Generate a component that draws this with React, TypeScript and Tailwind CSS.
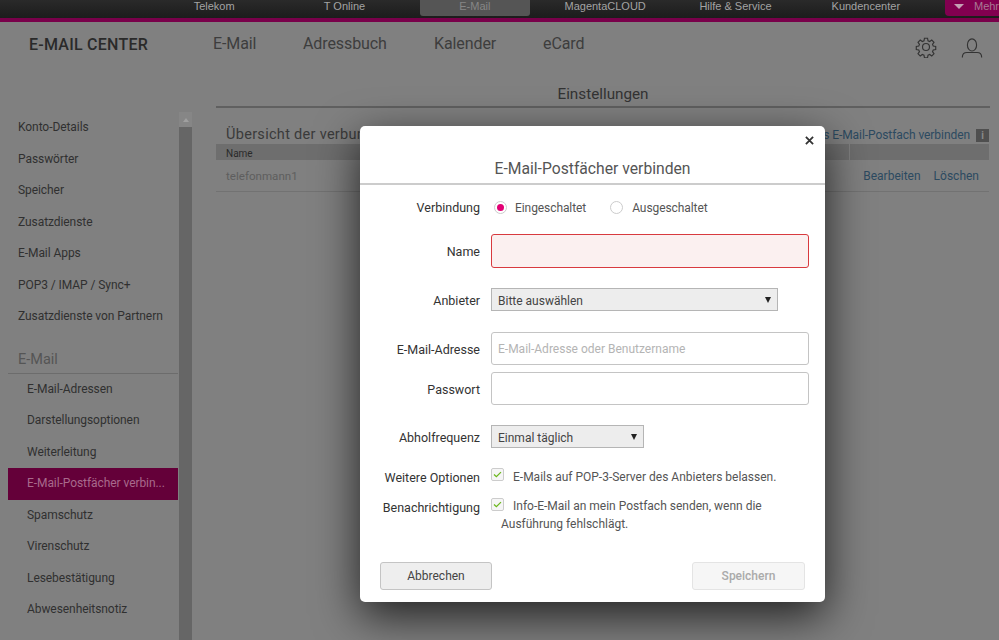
import type { ReactNode } from 'react'

const topLinks = ['Telekom', 'T Online', 'E-Mail', 'MagentaCLOUD', 'Hilfe & Service', 'Kundencenter']

const accountItems = ['Konto-Details', 'Passwörter', 'Speicher', 'Zusatzdienste', 'E-Mail Apps', 'POP3 / IMAP / Sync+', 'Zusatzdienste von Partnern']
const mailItems = ['E-Mail-Adressen', 'Darstellungsoptionen', 'Weiterleitung', 'E-Mail-Postfächer verbin...', 'Spamschutz', 'Virenschutz', 'Lesebestätigung', 'Abwesenheitsnotiz']

function Caret() {
  return <span className="w-0 h-0 border-x-[3px] border-x-transparent border-t-[6px] border-t-[#222]" />
}

function Checkbox() {
  return (
    <span className="inline-flex align-top mt-[1px] mr-[9px] indent-0 w-[13px] h-[13px] border border-[#ccc] rounded-[2px] bg-[#f6f6f6] items-center justify-center">
      <svg viewBox="0 0 12 12" className="w-[11px] h-[11px]" fill="none" stroke="#6cb81e" strokeWidth="1.4">
        <path d="M2.200 6 4.800 8.400 9.800 3.400" />
      </svg>
    </span>
  )
}

function Label({ children }: { children: ReactNode }) {
  return <span className="w-[120px] shrink-0 pt-[2px] leading-[18px] text-right text-[12.5px] text-[#333]">{children}</span>
}

export default function App() {
  return (
    <div className="relative h-[640px] w-[999px] overflow-hidden bg-[#808080] font-['Roboto',sans-serif]">
      <div className="h-[18px] bg-gradient-to-b from-[#2a2a2a] to-[#1c1c1c] flex pl-[149px] font-['Liberation_Sans',sans-serif] text-[11px] leading-[13px]">
        {topLinks.map((label) => (
          <div key={label} className="w-[130.5px] flex justify-center">
            {label === 'E-Mail' ? (
              <span className="w-[110px] h-[16px] text-center bg-[#555] text-[#868686] rounded-b-[3px]">{label}</span>
            ) : (
              <span className="text-[#a3a3a3]">{label}</span>
            )}
          </div>
        ))}
        <div className="ml-[14px] flex-1 h-[16px] bg-[#820050] rounded-bl-[4px] flex items-start pl-[9px] text-[#a87a94] gap-[10px]">
          <span className="mt-[4px] w-0 h-0 border-x-[5px] border-x-transparent border-t-[5px] border-t-[#c4a0b4]" />
          Mehr
        </div>
      </div>
      <div className="h-[4px] bg-[#79004a]" />

      <header className="h-[44px] flex items-center">
        <span className="ml-[29px] w-[184px] mt-[2px] text-[16px] font-medium tracking-[0.25px] text-[#2a2a2a]">E-MAIL CENTER</span>
        <nav className="flex text-[16px] text-[#3d3d3d] tracking-[-0.1px]">
          <span className="w-[90px]">E-Mail</span>
          <span className="w-[131px]">Adressbuch</span>
          <span className="w-[109px]">Kalender</span>
          <span>eCard</span>
        </nav>
        <div className="ml-auto mr-[16px] mt-[5px] flex gap-[24px] text-[#333]">
          <svg viewBox="0 0 24 24" className="w-[22px] h-[22px]" fill="none" stroke="currentColor" strokeWidth="1.25">
            <path d="M10.300 2.500h3.400l.5 2.700 1.800.8 2.300-1.600 2.400 2.400-1.600 2.300.8 1.800 2.700.5v3.400l-2.700.5-.8 1.800 1.600 2.300-2.400 2.400-2.300-1.600-1.800.8-.5 2.700h-3.400l-.5-2.700-1.800-.8-2.300 1.600-2.400-2.400 1.600-2.300-.8-1.800-2.700-.5v-3.400l2.700-.5.8-1.800-1.600-2.300 2.400-2.400 2.300 1.600 1.800-.8z" />
            <circle cx="12" cy="12" r="3.800" />
          </svg>
          <svg viewBox="0 0 24 24" className="w-[22px] h-[22px]" fill="none" stroke="currentColor" strokeWidth="1.25">
            <ellipse cx="12" cy="9.800" rx="5" ry="6.600" />
            <path d="M1.500 23.500V23c0-3 2-5 5-5h11c3 0 5 2 5 5v.5" />
          </svg>
        </div>
      </header>

      <div className="flex">
        <aside className="w-[192px] shrink-0 flex pt-[45px] pl-[8px]">
          <div className="w-[171px] shrink-0">
            <ul className="text-[12px] tracking-[-0.07px] text-[#303030]">
              {accountItems.map((item) => (
                <li key={item} className="h-[31.5px] leading-[32px] pl-[10px]">{item}</li>
              ))}
            </ul>
            <div className="mt-[12px] w-[170px] h-[30px] pl-[10px] leading-[32px] text-[14.5px] text-[#555] border-b border-[#6c6c6c]">E-Mail</div>
            <ul className="text-[12px] tracking-[-0.07px] text-[#303030]">
              {mailItems.map((item) => (
                <li
                  key={item}
                  className={`h-[31.5px] leading-[31.5px] pl-[19px] w-[170px] ${item.startsWith('E-Mail-Postf') ? 'bg-[#640039] text-[#a86a8c]' : ''}`}
                >
                  {item}
                </li>
              ))}
            </ul>
          </div>
          <div className="w-[13px] h-[620px] mt-[1px] shrink-0 flex flex-col">
            <div className="h-[15px] bg-[#868686] flex items-center justify-center">
              <span className="w-0 h-0 border-x-[3.5px] border-x-transparent border-b-[4px] border-b-[#a0a0a0]" />
            </div>
            <div className="flex-1 bg-[#666]" />
          </div>
        </aside>

        <main className="ml-[24px] w-[774px] pt-[15px]">
          <h2 className="h-[25px] text-center text-[15.25px] leading-[27px] text-[#333] border-b-2 border-[#606060] box-content">Einstellungen</h2>
          <div className="mt-[18px] pl-[10px] pr-[1px] flex justify-between items-center h-[18px]">
            <span className="text-[14.5px] text-[#3a3a3a] tracking-[0.3px]">Übersicht der verbundenen Postfächer</span>
            <span className="flex items-center gap-[6px] text-[12px] tracking-[-0.07px] text-[#2c4a60]">
              Neues E-Mail-Postfach verbinden
              <span className="w-[13px] h-[13px] bg-[#4f4f4f] text-[#8a8a8a] text-[10px] leading-[13px] font-bold text-center">i</span>
            </span>
          </div>
          <div className="mr-[1px] h-[16px] bg-[#6e6e6e] pl-[10px] text-[10px] leading-[19px] text-[#2a2a2a] flex justify-between">
            Name
            <span className="w-[140px] border-l border-[#808080]" />
          </div>
          <div className="h-[32px] pt-[1px] mr-[1px] flex items-center justify-between px-[10px] border-b border-[#727272] text-[12px]">
            <span className="text-[#5e5e5e] text-[11.6px] pt-[1px]">telefonmann1</span>
            <span className="flex gap-[13px] text-[#2c4a60]">
              <span>Bearbeiten</span>
              <span>Löschen</span>
            </span>
          </div>
        </main>
      </div>

      {/* Dialog: E-Mail-Postfächer verbinden */}
      <div className="absolute left-[360px] top-[126px] w-[465px] h-[476px] bg-white rounded-[5px] shadow-[0_14px_45px_rgba(0,0,0,0.75)] flex flex-col">
        <div className="h-[57px] shrink-0 relative border-b-2 border-[#ccc] box-content">
          <span className="absolute right-[11px] top-[10px] text-[#333]">
            <svg viewBox="0 0 10 10" className="w-[9px] h-[9px] block" stroke="currentColor" strokeWidth="2">
              <path d="M1 1 9 9M9 1 1 9" />
            </svg>
          </span>
          <div className="absolute inset-x-0 bottom-[4px] text-center text-[15.7px] leading-[20px] text-[#555]">E-Mail-Postfächer verbinden</div>
        </div>

        <div className="mt-[13px] flex items-center h-[18px] text-[12px] tracking-[-0.08px] text-[#555]">
          <span className="tracking-normal flex items-center"><Label>Verbindung</Label></span>
          <span className="ml-[14px] w-[13px] h-[13px] rounded-full border border-[#ccc] flex items-center justify-center">
            <span className="w-[7px] h-[7px] rounded-full bg-[#e20074]" />
          </span>
          <span className="ml-[8px] pt-[2px]">Eingeschaltet</span>
          <span className="ml-[24px] w-[13px] h-[13px] rounded-full border border-[#ccc]" />
          <span className="ml-[9px] pt-[2px]">Ausgeschaltet</span>
        </div>

        <div className="mt-[18px] flex items-center">
          <Label>Name</Label>
          <input className="ml-[11px] w-[318px] h-[34px] rounded-[3px] border border-[#d83a3f] bg-[#fbf0f0]" />
        </div>

        <div className="mt-[20px] flex items-center">
          <Label>Anbieter</Label>
          <div className="ml-[11px] w-[287px] h-[23px] px-[6px] flex items-center justify-between border border-[#b5b5b5] bg-[#ededed] text-[12px] text-[#444]">
            <span className="pt-[2px]">Bitte auswählen</span>
            <Caret />
          </div>
        </div>

        <div className="mt-[21px] flex items-center">
          <Label>E-Mail-Adresse</Label>
          <input
            placeholder="E-Mail-Adresse oder Benutzername"
            className="ml-[11px] w-[318px] h-[33px] px-[6px] rounded-[3px] border border-[#c4c4c4] bg-white text-[12px] placeholder:text-[#b4b4b4]"
          />
        </div>

        <div className="mt-[7px] flex items-center">
          <Label>Passwort</Label>
          <input className="ml-[11px] w-[318px] h-[33px] rounded-[3px] border border-[#c4c4c4] bg-white" />
        </div>

        <div className="mt-[20px] flex items-center">
          <Label>Abholfrequenz</Label>
          <div className="ml-[11px] w-[153px] h-[23px] px-[6px] flex items-center justify-between border border-[#b5b5b5] bg-[#ededed] text-[12px] text-[#444]">
            <span className="pt-[2px]">Einmal täglich</span>
            <Caret />
          </div>
        </div>

        <div className="mt-[19px] flex items-start">
          <Label>Weitere Optionen</Label>
          <div className="ml-[11px] w-[300px] pl-[10px] -indent-[10px] text-[12px] leading-[20px] text-[#555]">
            <Checkbox />
            E-Mails auf POP-3-Server des Anbieters belassen.
          </div>
        </div>

        <div className="mt-[10px] flex items-start">
          <Label>Benachrichtigung</Label>
          <div className="ml-[11px] w-[300px] pl-[10px] -indent-[10px] text-[12px] leading-[18px] text-[#555]">
            <Checkbox />
            Info-E-Mail an mein Postfach senden, wenn die Ausführung fehlschlägt.
          </div>
        </div>

        <div className="mt-auto mb-[12px] pl-[20px] pr-[20px] flex justify-between">
          <button className="w-[112px] h-[28px] rounded-[3px] border border-[#c4c4c4] bg-[#eee] text-[12px] text-[#444]">Abbrechen</button>
          <button className="w-[113px] h-[28px] rounded-[3px] border border-[#e4e4e4] bg-[#f6f6f6] text-[12px] text-[#aaa] font-medium">Speichern</button>
        </div>
      </div>
    </div>
  )
}
